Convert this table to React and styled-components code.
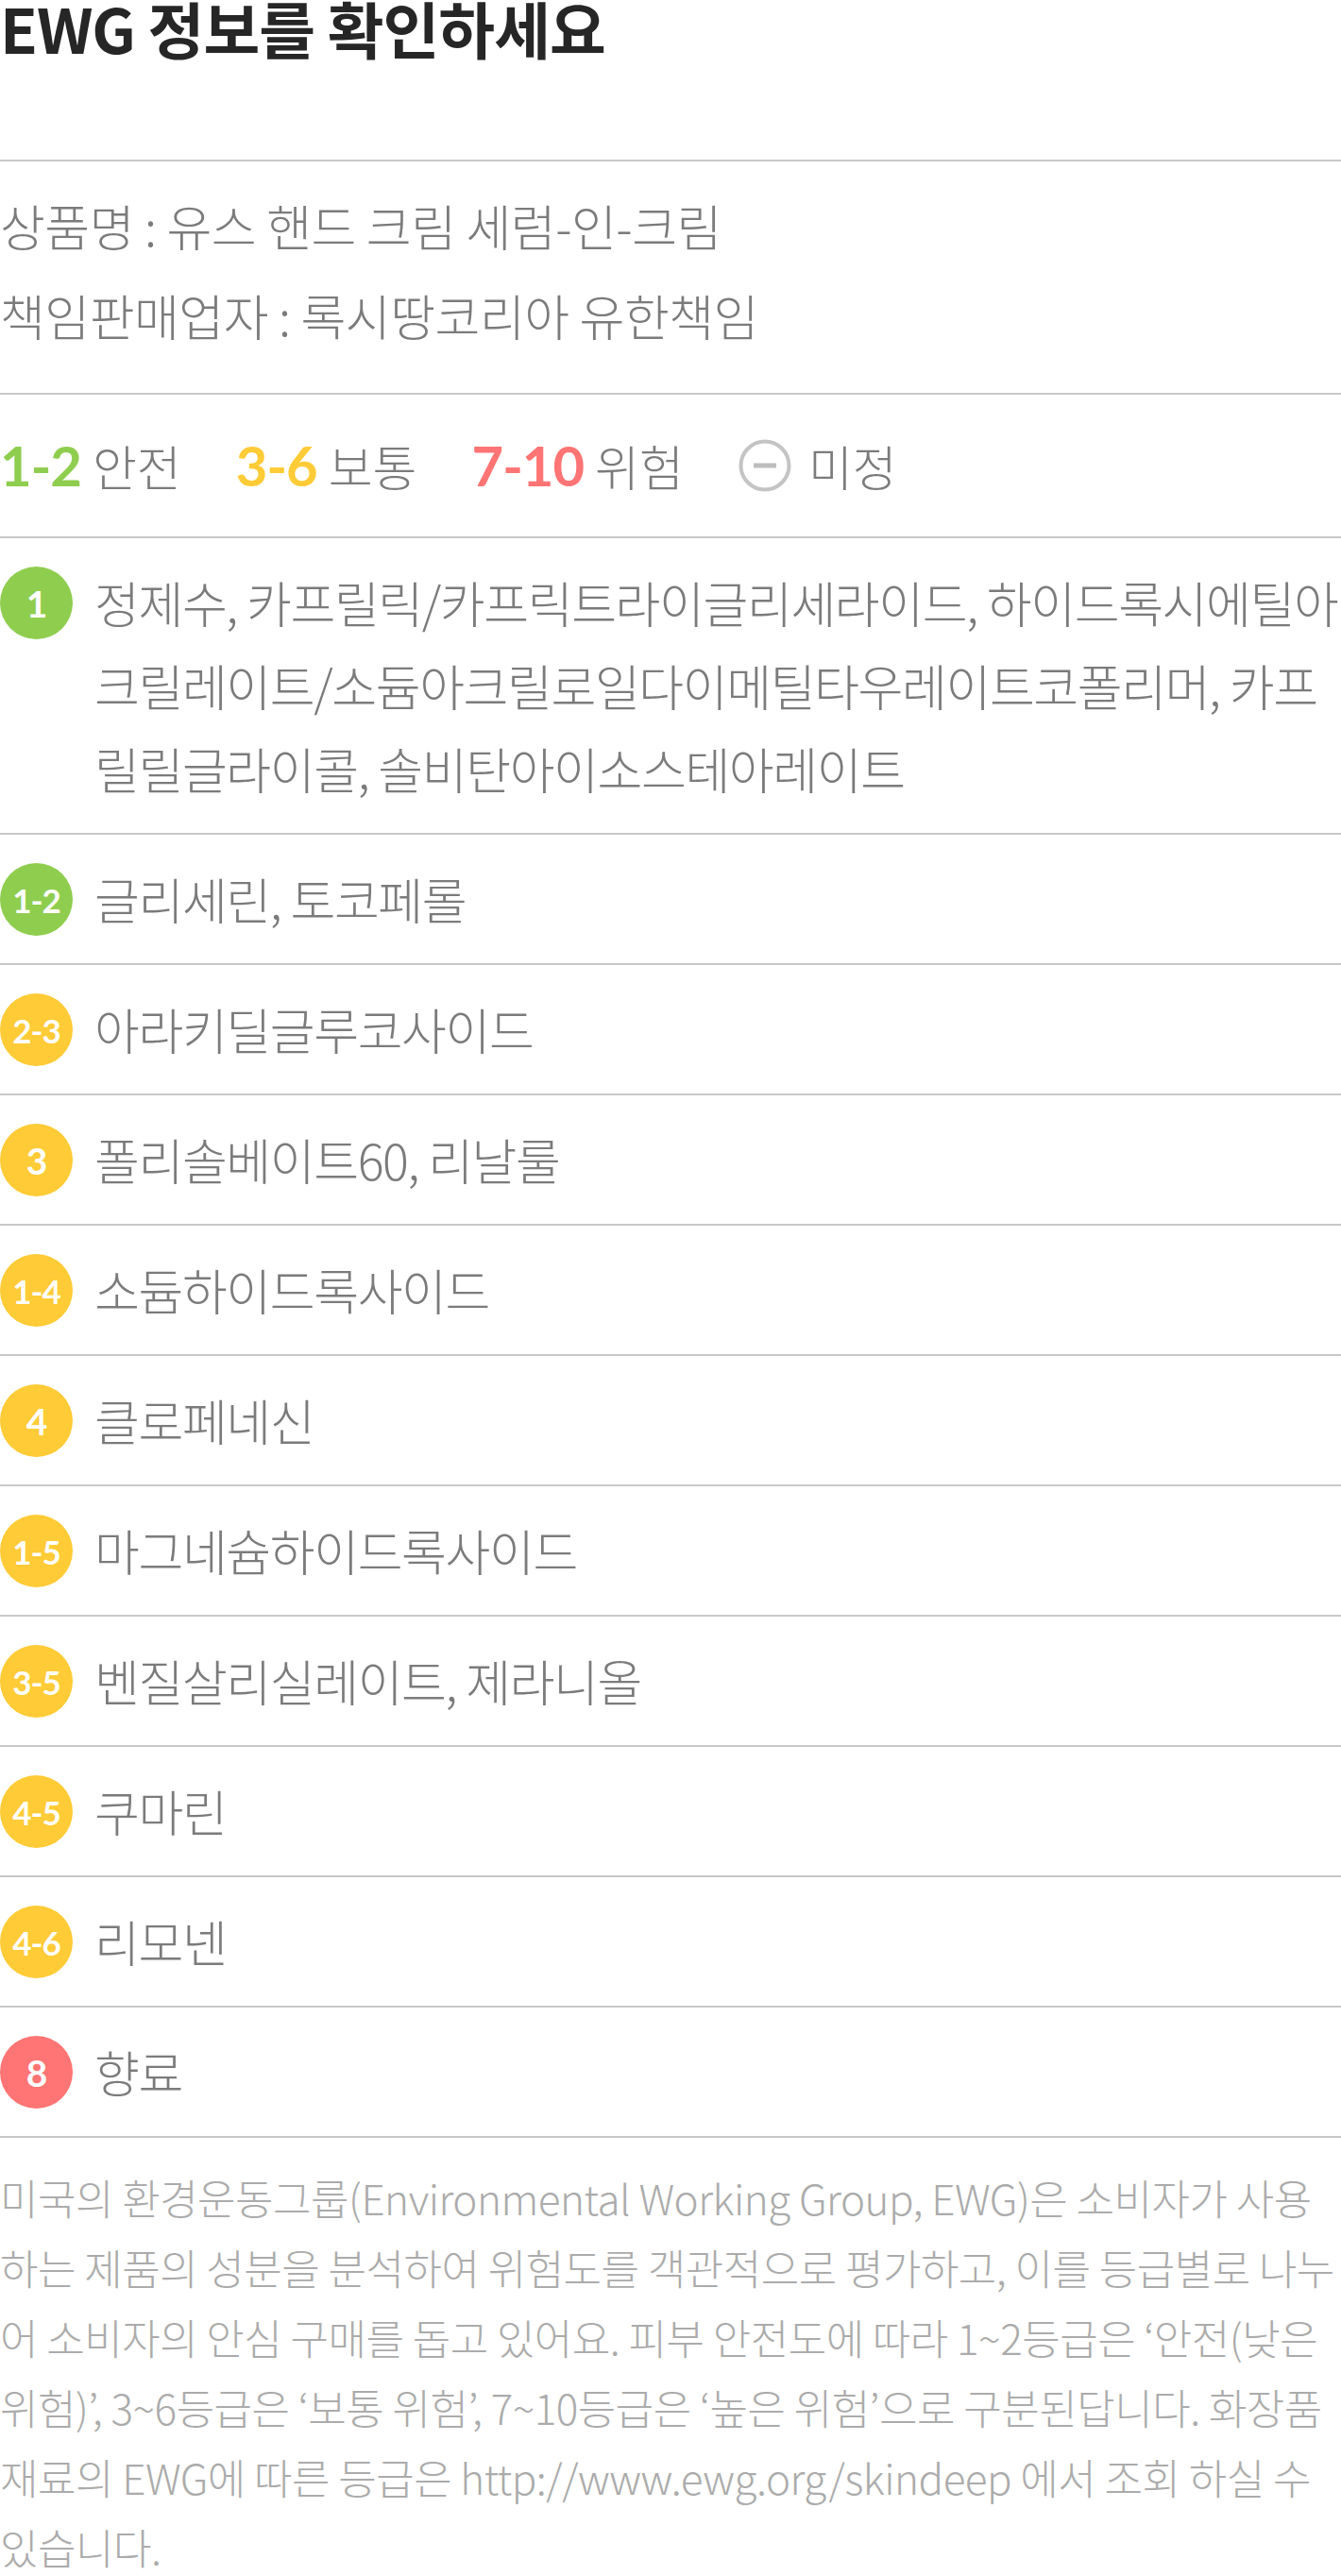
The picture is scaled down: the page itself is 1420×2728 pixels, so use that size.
import React from "react";
import styled, { createGlobalStyle } from "styled-components";

const GlobalStyle = createGlobalStyle`
  html, body {
    margin: 0;
    padding: 0;
    background: #fff;
  }
  body {
    font-family: "Noto Sans CJK KR", "Noto Sans", sans-serif;
    -webkit-font-smoothing: antialiased;
  }
  * {
    box-sizing: border-box;
  }
`;

const LIGHT_FONT = `"Noto Sans CJK KR Light", "Noto Sans CJK KR", "Noto Sans", sans-serif`;

const GRADE_COLORS = {
  safe: "#8fcd4f",
  normal: "#ffcb36",
  danger: "#ff7474",
};

const ingredients = [
  {
    grade: "1",
    level: "safe",
    name:
      "정제수, 카프릴릭/카프릭트라이글리세라이드, 하이드록시에틸아크릴레이트/소듐아크릴로일다이메틸타우레이트코폴리머, 카프릴릴글라이콜, 솔비탄아이소스테아레이트",
  },
  { grade: "1-2", level: "safe", name: "글리세린, 토코페롤" },
  { grade: "2-3", level: "normal", name: "아라키딜글루코사이드" },
  { grade: "3", level: "normal", name: "폴리솔베이트60, 리날룰" },
  { grade: "1-4", level: "normal", name: "소듐하이드록사이드" },
  { grade: "4", level: "normal", name: "클로페네신" },
  { grade: "1-5", level: "normal", name: "마그네슘하이드록사이드" },
  { grade: "3-5", level: "normal", name: "벤질살리실레이트, 제라니올" },
  { grade: "4-5", level: "normal", name: "쿠마린" },
  { grade: "4-6", level: "normal", name: "리모넨" },
  { grade: "8", level: "danger", name: "향료" },
];

const Page = styled.div`
  width: 1420px;
  color: #7b7b7b;
`;

const Header = styled.header`
  height: 171px;
  border-bottom: 2px solid #c8c8c8;
`;

const Title = styled.h1`
  margin: 0;
  font-size: 65px;
  line-height: 58px;
  font-weight: 700;
  color: #262626;
  letter-spacing: -1px;
`;

const Section = styled.section`
  border-bottom: 2px solid #c8c8c8;
`;

const ProductInfo = styled(Section)`
  padding: 20px 0 35px;
`;

const InfoLine = styled.p`
  margin: 0;
  font-family: ${LIGHT_FONT};
  font-size: 52px;
  line-height: 95px;
  font-weight: 300;
  color: #7b7b7b;
  letter-spacing: -0.5px;
`;

const Legend = styled(Section)`
  height: 152px;
  display: flex;
  align-items: center;
  gap: 58px;
`;

const LegendItem = styled.div`
  display: flex;
  align-items: center;
  gap: ${(p) => (p.$icon ? "18px" : "12px")};
`;

const LegendRange = styled.span`
  font-family: "Lato", "Noto Sans", sans-serif;
  font-weight: 700;
  font-size: 58px;
  line-height: 1;
  letter-spacing: -1px;
  color: ${(p) => p.$color};
`;

const LegendLabel = styled.span`
  font-family: ${LIGHT_FONT};
  font-size: 51px;
  font-weight: 300;
  line-height: 1;
  color: #7b7b7b;
`;

const Row = styled(Section)`
  display: flex;
  align-items: flex-start;
  padding: 24px 0;
`;

const Badge = styled.span`
  flex: 0 0 77px;
  height: 77px;
  margin: 6px 23px 0 0;
  border-radius: 50%;
  background: ${(p) => p.$color};
  color: #fff;
  display: flex;
  align-items: center;
  justify-content: center;
  font-family: "Lato", "Noto Sans", sans-serif;
  font-weight: 700;
  font-size: ${(p) => (p.$wide ? "35px" : "39px")};
  letter-spacing: -1px;
`;

const IngredientName = styled.p`
  margin: 0;
  flex: 1;
  font-family: ${LIGHT_FONT};
  font-size: 52px;
  line-height: 88px;
  font-weight: 300;
  color: #7b7b7b;
  letter-spacing: -1.4px;
`;

const Note = styled.p`
  margin: 0;
  padding-top: 26px;
  font-family: ${LIGHT_FONT};
  font-size: 44px;
  line-height: 74px;
  font-weight: 300;
  color: #ababab;
  letter-spacing: -0.5px;
`;

function UndecidedIcon() {
  return (
    <svg width="56" height="56" viewBox="0 0 56 56">
      <circle cx="28" cy="28" r="25.5" fill="none" stroke="#c4c4c4" strokeWidth="4" />
      <rect x="16" y="25.5" width="24" height="5" fill="#bdbdbd" />
    </svg>
  );
}

export default function App() {
  return (
    <Page>
      <GlobalStyle />
      <Header>
        <Title>EWG 정보를 확인하세요</Title>
      </Header>

      <ProductInfo>
        <InfoLine>상품명 : 유스 핸드 크림 세럼-인-크림</InfoLine>
        <InfoLine>책임판매업자 : 록시땅코리아 유한책임</InfoLine>
      </ProductInfo>

      <Legend>
        <LegendItem>
          <LegendRange $color={GRADE_COLORS.safe}>1-2</LegendRange>
          <LegendLabel>안전</LegendLabel>
        </LegendItem>
        <LegendItem>
          <LegendRange $color={GRADE_COLORS.normal}>3-6</LegendRange>
          <LegendLabel>보통</LegendLabel>
        </LegendItem>
        <LegendItem>
          <LegendRange $color={GRADE_COLORS.danger}>7-10</LegendRange>
          <LegendLabel>위험</LegendLabel>
        </LegendItem>
        <LegendItem $icon>
          <UndecidedIcon />
          <LegendLabel>미정</LegendLabel>
        </LegendItem>
      </Legend>

      {ingredients.map((item) => (
        <Row key={item.grade + item.name}>
          <Badge $color={GRADE_COLORS[item.level]} $wide={item.grade.length > 1}>
            {item.grade}
          </Badge>
          <IngredientName>{item.name}</IngredientName>
        </Row>
      ))}

      <Note>
        미국의 환경운동그룹(Environmental Working Group, EWG)은 소비자가 사용하는 제품의
        성분을 분석하여 위험도를 객관적으로 평가하고, 이를 등급별로 나누어 소비자의 안심
        구매를 돕고 있어요. 피부 안전도에 따라 1~2등급은 ‘안전(낮은 위험)’, 3~6등급은
        ‘보통 위험’, 7~10등급은 ‘높은 위험’으로 구분된답니다. 화장품 재료의 EWG에 따른
        등급은 http://www.ewg.org/skindeep 에서 조회 하실 수 있습니다.
      </Note>
    </Page>
  );
}
